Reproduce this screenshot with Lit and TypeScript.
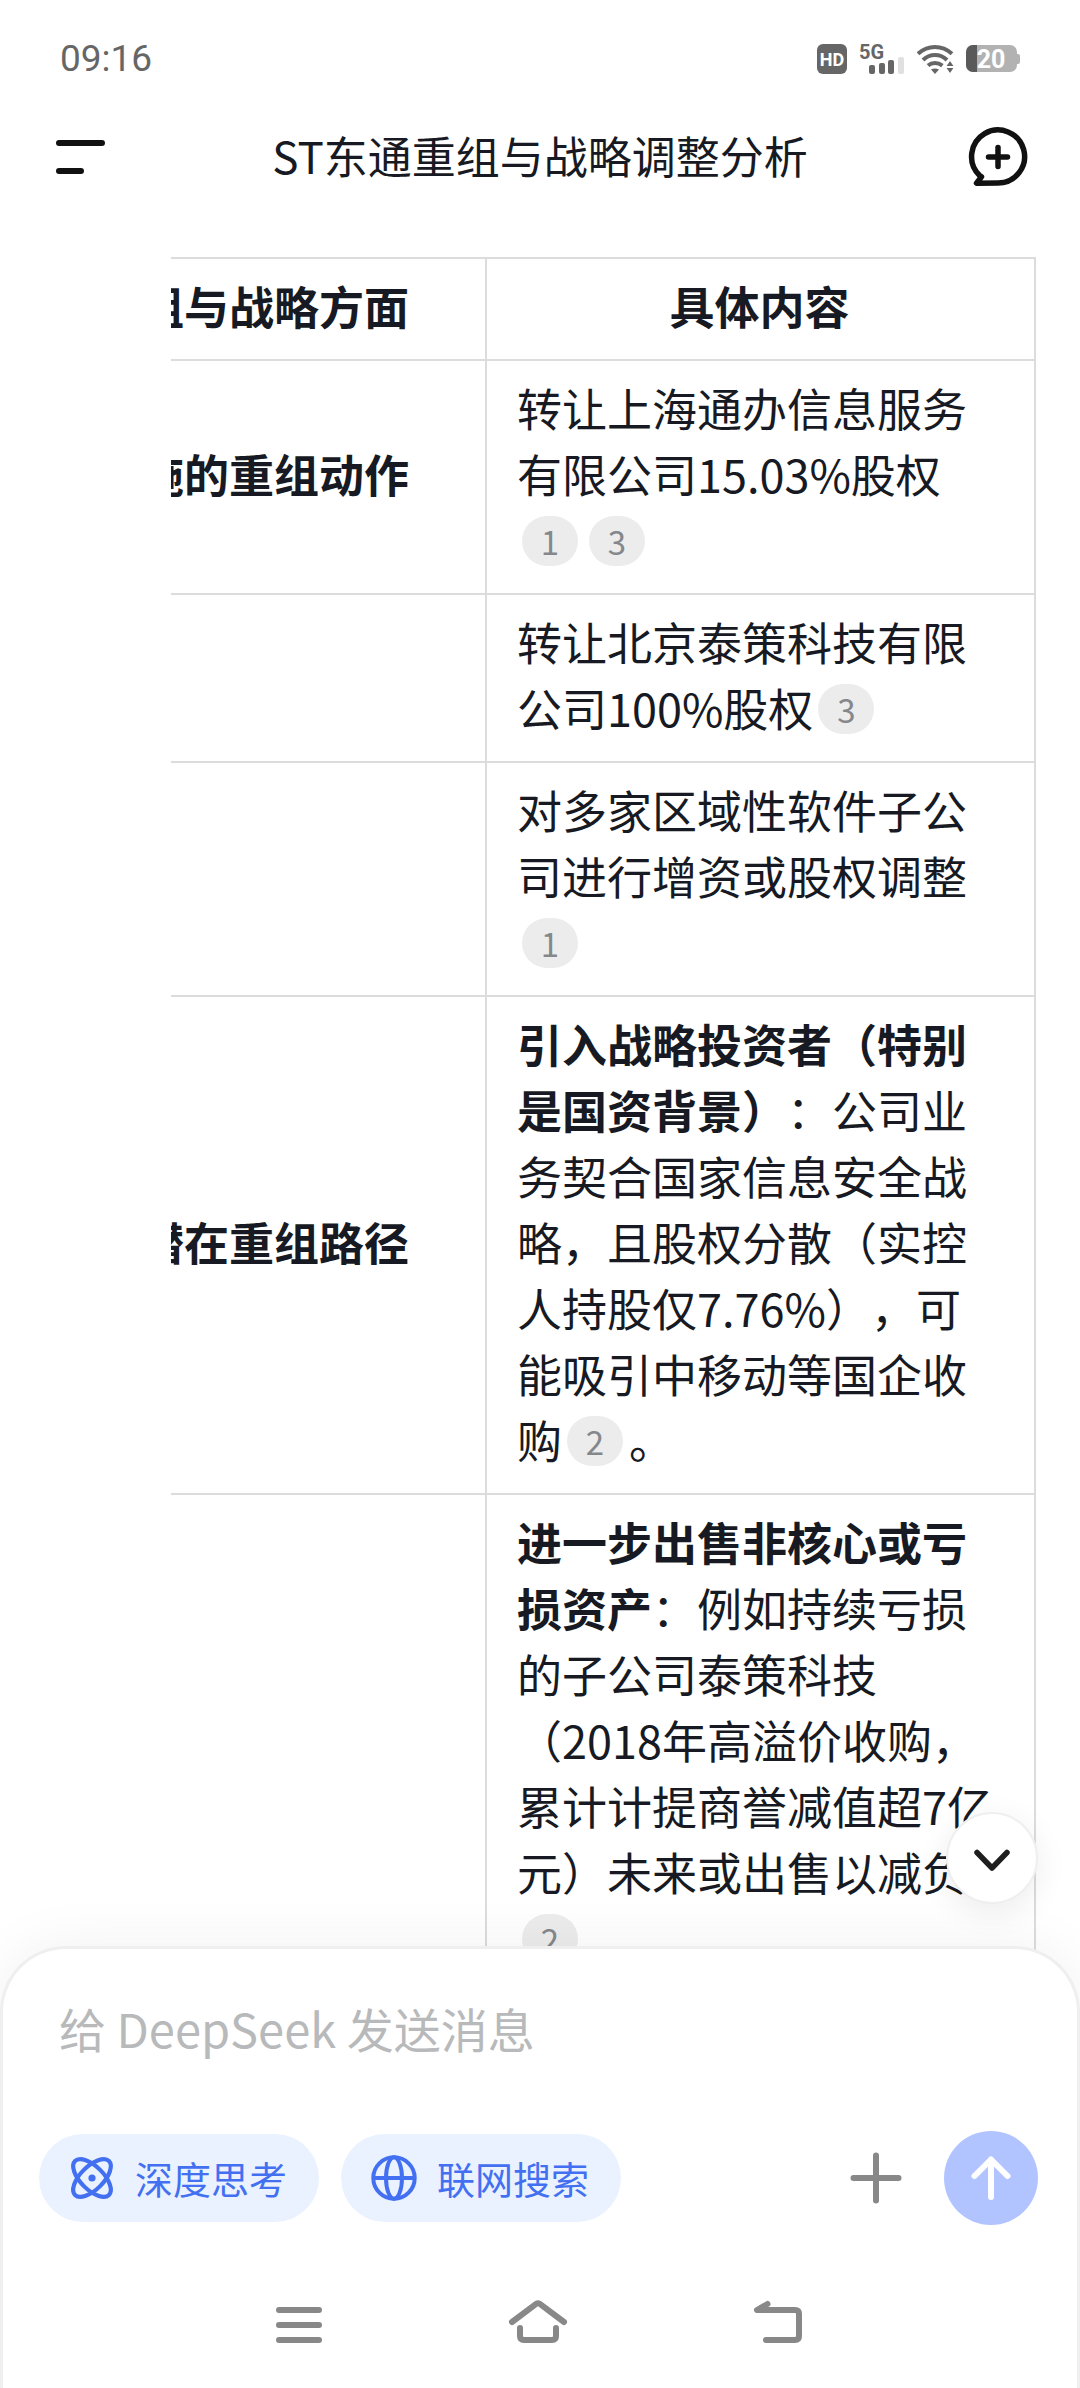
import { LitElement, html, css, svg } from "lit";
import { customElement, property } from "lit/decorators.js";

type Part = string | { strong: string } | { cite: number };

interface Row {
  label: string;
  parts: Part[];
}

const HEADINGS = ["组与战略方面", "具体内容"];

const ROWS: Row[] = [
  {
    label: "施的重组动作",
    parts: ["转让上海通办信息服务有限公司15.03%股权", { cite: 1 }, { cite: 3 }],
  },
  { label: "", parts: ["转让北京泰策科技有限公司100%股权", { cite: 3 }] },
  { label: "", parts: ["对多家区域性软件子公司进行增资或股权调整", { cite: 1 }] },
  {
    label: "潜在重组路径",
    parts: [
      { strong: "引入战略投资者（特别是国资背景）" },
      "：公司业务契合国家信息安全战略，且股权分散（实控人持股仅7.76%），可能吸引中移动等国企收购",
      { cite: 2 },
      "。",
    ],
  },
  {
    label: "",
    parts: [
      { strong: "进一步出售非核心或亏损资产" },
      "：例如持续亏损的子公司泰策科技（2018年高溢价收购，累计计提商誉减值超7亿元）未来或出售以减负",
      { cite: 2 },
    ],
  },
];

const reset = css`
  :host {
    box-sizing: border-box;
    font-family: "Noto Sans CJK SC", "Noto Sans", sans-serif;
    text-spacing-trim: space-all;
  }
  button {
    display: flex;
    align-items: center;
    justify-content: center;
    margin: 0;
    padding: 0;
    border: 0;
    background: none;
    color: inherit;
    font: inherit;
    cursor: pointer;
  }
  svg {
    display: block;
    flex: none;
  }
  .line {
    fill: none;
    stroke: currentColor;
    stroke-linecap: round;
    stroke-linejoin: round;
  }
`;

@customElement("status-bar")
export class StatusBar extends LitElement {
  static styles = [
    reset,
    css`
      :host {
        display: flex;
        align-items: center;
        justify-content: space-between;
        height: 118px;
        padding: 0 60px;
        color: #666;
      }
      .time {
        font-family: Roboto, sans-serif;
        font-size: 37px;
        line-height: 44px;
      }
      .icons {
        display: flex;
        align-items: center;
        gap: 12px;
      }
      text {
        font-family: Roboto, sans-serif;
        font-weight: 700;
      }
      .hd {
        font-size: 18px;
        fill: #fff;
      }
      .net {
        font-size: 20px;
        fill: #666;
      }
      .level {
        font-size: 25px;
        fill: #fff;
      }
    `,
  ];

  render() {
    return html`
      <span class="time">09:16</span>
      <div class="icons">
        <svg width="30" height="30" viewBox="0 0 30 30">
          <rect width="30" height="30" rx="6" fill="#666" />
          <text class="hd" x="15" y="21.500" text-anchor="middle">HD</text>
        </svg>
        <svg width="46" height="30" viewBox="0 0 46 30">
          <text class="net" x="0" y="15">5G</text>
          <rect x="10" y="21" width="6" height="9" rx="2" fill="#666" />
          <rect x="20" y="19" width="6" height="11" rx="2" fill="#666" />
          <rect x="29" y="16" width="6" height="14" rx="2" fill="#666" />
          <rect x="39" y="13" width="6" height="17" rx="2" fill="#e0e0e0" />
        </svg>
        <svg width="37" height="30" viewBox="0 0 37 30">
          <g fill="none" stroke="#666" stroke-width="4">
            <path d="M1 9.8Q8.5 3 18 3T35 9.8" />
            <path d="M6 16Q11 11 18 11T30 16" />
            <path d="M11 21.6Q14 19 18 19T25.400 21.600" />
          </g>
          <path d="M14 25.600Q18 23.600 22 25.600L18 30Z" fill="#666" />
          <path d="M29.600 22L33 17L36.400 22ZM29.600 24L33 29L36.400 24Z" fill="#666" />
        </svg>
        <svg width="54" height="28" viewBox="0 0 54 28">
          <path d="M50 9h2q2 0 2 2v6q0 2-2 2h-2z" fill="#b2b2b2" />
          <rect width="51" height="27" rx="7" fill="#b2b2b2" />
          <path d="M11 0H7a7 7 0 0 0-7 7v13a7 7 0 0 0 7 7h4z" fill="#5a5a5a" />
          <text class="level" x="25" y="23" text-anchor="middle">20</text>
        </svg>
      </div>
    `;
  }
}

@customElement("chat-header")
export class ChatHeader extends LitElement {
  static styles = [
    reset,
    css`
      :host {
        display: flex;
        align-items: center;
        gap: 16px;
        height: 78px;
        padding: 0 52px;
        color: #111;
      }
      h1 {
        flex: 1;
        margin: 0;
        padding-bottom: 4px;
        font-size: 44px;
        font-weight: 400;
        line-height: 66px;
        text-align: center;
        white-space: nowrap;
        color: #171a22;
      }
    `,
  ];

  render() {
    return html`
      <button aria-label="菜单">
        <svg width="64" height="64" viewBox="0 0 64 64">
          <path class="line" stroke-width="6" d="M7 18H50M7 46H29" />
        </svg>
      </button>
      <h1>ST东通重组与战略调整分析</h1>
      <button aria-label="新对话">
        <svg width="64" height="64" viewBox="0 0 64 64">
          <path
            class="line"
            stroke-width="5.5"
            d="M34 58A26.500 26.500 0 1 0 15.600 50.500L17.500 51.800L12.500 58.200Z"
          />
          <path class="line" stroke-width="5.5" d="M34 22.500V41.500M24.500 32H43.500" />
        </svg>
      </button>
    `;
  }
}

@customElement("answer-table")
export class AnswerTable extends LitElement {
  @property({ attribute: false }) rows: Row[] = [];

  static styles = [
    reset,
    css`
      :host {
        display: block;
        overflow: hidden;
        margin: 0 44px 0 171px;
      }
      table {
        width: calc(100% + 40px);
        margin-left: -40px;
        table-layout: fixed;
        border-collapse: collapse;
        color: #171a22;
        font-size: 45px;
        line-height: 66px;
      }
      .label-col {
        width: 354px;
      }
      th,
      td {
        padding: 14px 32px 20px 30px;
        border: 2px solid #dcdcdc;
        font-weight: 400;
        text-align: left;
      }
      th {
        font-weight: 700;
      }
      thead th {
        text-align: center;
      }
      .label {
        padding-right: 76px;
        padding-left: 0;
        text-align: right;
        white-space: nowrap;
      }
      thead .label {
        text-align: right;
      }
      strong {
        font-weight: 700;
      }
      .cite {
        display: inline-block;
        min-width: 56px;
        margin: 0 6px 0 5px;
        border-radius: 25px;
        background: #ececec;
        color: #85878b;
        font-size: 33px;
        line-height: 50px;
        text-align: center;
        text-decoration: none;
        vertical-align: 4px;
      }
    `,
  ];

  private part(p: Part) {
    if (typeof p === "string") return p;
    if ("strong" in p) return html`<strong>${p.strong}</strong>`;
    return html`<a class="cite" href="#source-${p.cite}">${p.cite}</a>`;
  }

  render() {
    return html`
      <table>
        <colgroup>
          <col class="label-col" />
          <col />
        </colgroup>
        <thead>
          <tr>
            <th class="label" scope="col">${HEADINGS[0]}</th>
            <th scope="col">${HEADINGS[1]}</th>
          </tr>
        </thead>
        <tbody>
          ${this.rows.map(
            (row) => html`<tr>
              <th class="label" scope="row">${row.label}</th>
              <td>${row.parts.map((p) => this.part(p))}</td>
            </tr>`
          )}
        </tbody>
      </table>
    `;
  }
}

const atom = svg`
  <ellipse class="line" cx="23" cy="23" rx="24" ry="11.500" stroke-width="4.2" transform="rotate(45 23 23)" />
  <ellipse class="line" cx="23" cy="23" rx="24" ry="11.500" stroke-width="4.2" transform="rotate(-45 23 23)" />
  <circle cx="23" cy="23" r="3.6" fill="currentColor" />
`;

const globe = svg`
  <circle class="line" cx="23" cy="23" r="20.700" stroke-width="4" />
  <ellipse class="line" cx="23" cy="23" rx="8" ry="20.700" stroke-width="4" />
  <path class="line" stroke-width="4" d="M3 23H43" />
`;

@customElement("message-composer")
export class MessageComposer extends LitElement {
  static styles = [
    reset,
    css`
      :host {
        display: block;
        padding: 46px 39px 0 36px;
        border: 3px solid #efefef;
        border-bottom: 0;
        border-radius: 66px 66px 0 0;
        background: #fff;
        box-shadow: 0 0 60px rgba(0, 0, 0, 0.06);
      }
      .prompt {
        display: block;
        box-sizing: border-box;
        width: 100%;
        height: 66px;
        padding: 0 20px;
        border: 0;
        outline: 0;
        background: none;
        color: #171a22;
        font: inherit;
        font-size: 47px;
        line-height: 66px;
      }
      .prompt::placeholder {
        color: #b8b9bb;
        opacity: 1;
      }
      .tools {
        display: flex;
        align-items: center;
        gap: 22px;
        margin-top: 70px;
      }
      .mode {
        gap: 20px;
        height: 88px;
        padding: 0 32px 0 30px;
        border-radius: 44px;
        background: #ebf2ff;
        color: #4370f0;
        font-size: 38px;
        line-height: 56px;
        white-space: nowrap;
      }
      .mode svg {
        overflow: visible;
      }
      .add {
        margin-left: auto;
        margin-right: 16px;
        color: #888;
      }
      .send {
        width: 94px;
        height: 94px;
        border-radius: 50%;
        background: #b2c4ff;
        color: #fff;
      }
      nav {
        display: grid;
        grid-template-columns: repeat(3, 1fr);
        margin-top: 37px;
        padding: 0 14%;
        color: #888;
      }
      nav button {
        height: 126px;
      }
    `,
  ];

  render() {
    return html`
      <input class="prompt" type="text" aria-label="消息" placeholder="给 DeepSeek 发送消息" />
      <div class="tools">
        <button class="mode" aria-pressed="true">
          <svg width="46" height="46" viewBox="0 0 46 46">${atom}</svg>深度思考
        </button>
        <button class="mode" aria-pressed="true">
          <svg width="46" height="46" viewBox="0 0 46 46">${globe}</svg>联网搜索
        </button>
        <button class="add" aria-label="添加">
          <svg width="60" height="60" viewBox="0 0 60 60">
            <path class="line" stroke-width="6" d="M30 7.500V52.500M7.500 30H52.500" />
          </svg>
        </button>
        <button class="send" aria-label="发送">
          <svg width="60" height="60" viewBox="0 0 60 60">
            <path class="line" stroke-width="6" d="M30 49V11.500M13.500 28L30 11.500L46.500 28" />
          </svg>
        </button>
      </div>
      <nav>
        <button aria-label="最近任务">
          <svg width="64" height="64" viewBox="0 0 64 64">
            <path class="line" stroke-width="6" d="M12 17H52M12 32H52M12 47H52" />
          </svg>
        </button>
        <button aria-label="主屏幕">
          <svg width="64" height="64" viewBox="0 0 64 64">
            <path
              class="line"
              stroke-width="6"
              d="M6 29L30.500 10.700Q32 9.700 33.500 10.700L58 29M14 35V43Q14 47 18 47H46Q50 47 50 43V35"
            />
          </svg>
        </button>
        <button aria-label="返回">
          <svg width="64" height="64" viewBox="0 0 64 64">
            <path class="line" stroke-width="6" d="M21.500 11L11 17H49Q53 17 53 21V43Q53 47 49 47H20" />
          </svg>
        </button>
      </nav>
    `;
  }
}

@customElement("app-root")
export class AppRoot extends LitElement {
  static styles = [
    reset,
    css`
      :host {
        display: flex;
        flex-direction: column;
        height: 100vh;
        overflow: hidden;
        background: #fff;
      }
      status-bar,
      chat-header,
      message-composer {
        flex: none;
      }
      .thread {
        position: relative;
        flex: 1;
        min-height: 0;
        overflow: hidden;
        padding-top: 61px;
      }
      .to-end {
        position: absolute;
        right: 42px;
        bottom: 108px;
        box-sizing: border-box;
        width: 92px;
        height: 92px;
        border: 2px solid #efefef;
        border-radius: 50%;
        background: #fff;
        color: #1f1f1f;
        box-shadow: 0 8px 32px rgba(0, 0, 0, 0.08);
      }
      message-composer {
        position: relative;
        margin-top: -66px;
      }
    `,
  ];

  render() {
    return html`
      <status-bar></status-bar>
      <chat-header></chat-header>
      <main class="thread">
        <answer-table .rows=${ROWS}></answer-table>
        <button class="to-end" aria-label="滚动到底部">
          <svg width="48" height="48" viewBox="0 0 48 48">
            <path class="line" stroke-width="5.5" d="M9 18.500L24 34L39 18.500" />
          </svg>
        </button>
      </main>
      <message-composer></message-composer>
    `;
  }
}
